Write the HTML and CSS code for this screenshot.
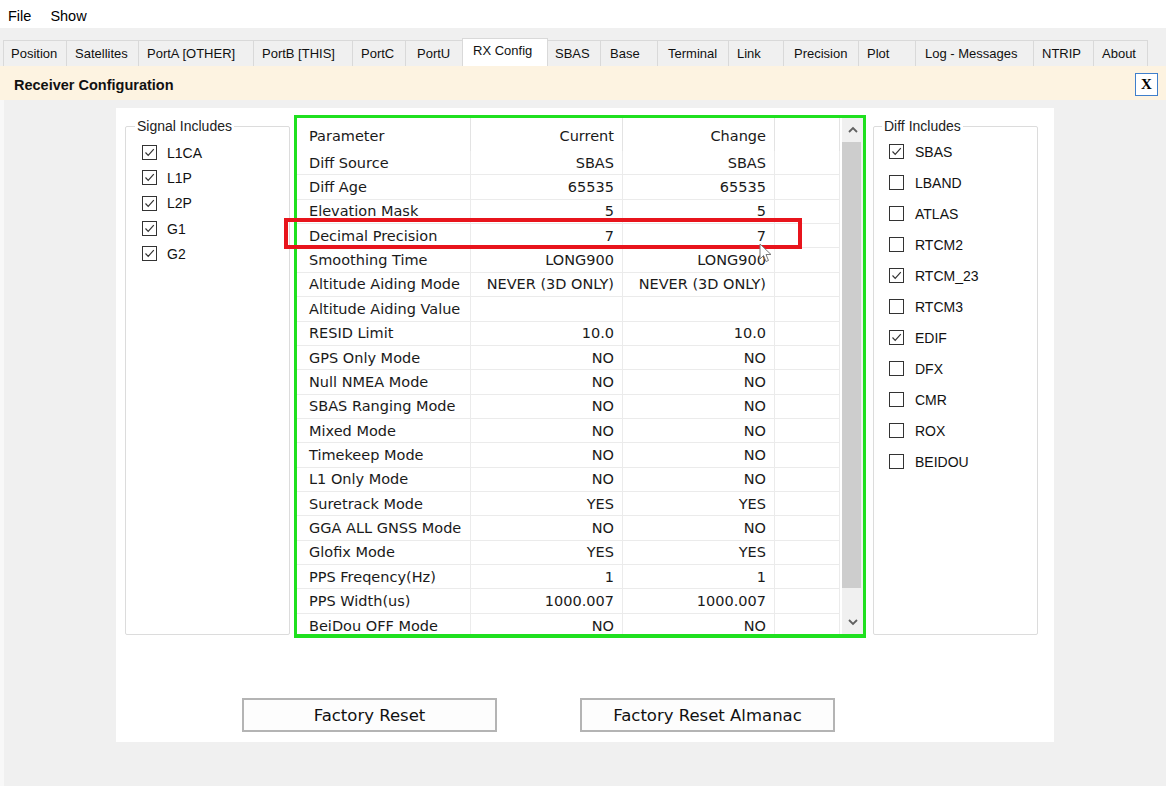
FILE: index.html
```html
<!DOCTYPE html>
<html lang="en">
<head>
    <meta charset="UTF-8">
    <title>Receiver Configuration</title>
    <link rel="stylesheet" href="styles.css">
</head>
<body>
    <div class="menubar">
        <span class="menu-item">File</span>
        <span class="menu-item">Show</span>
    </div>

    <div class="tabstrip">
        <div class="tab">Position</div>
        <div class="tab">Satellites</div>
        <div class="tab">PortA [OTHER]</div>
        <div class="tab">PortB [THIS]</div>
        <div class="tab">PortC</div>
        <div class="tab">PortU</div>
        <div class="tab active">RX Config</div>
        <div class="tab">SBAS</div>
        <div class="tab">Base</div>
        <div class="tab">Terminal</div>
        <div class="tab">Link</div>
        <div class="tab">Precision</div>
        <div class="tab">Plot</div>
        <div class="tab">Log - Messages</div>
        <div class="tab">NTRIP</div>
        <div class="tab">About</div>
    </div>

    <div class="titlebar">
        <span class="title">Receiver Configuration</span>
        <button class="close-btn">X</button>
    </div>

    <div class="workarea">
        <div class="panel">
            <div class="panel-top">
                <!-- signal checkboxes -->
                <fieldset class="group signal-group">
                    <legend>Signal Includes</legend>
                    <label class="check"><span class="box on"><svg viewBox="0 0 13 13"><polyline points="2.5,6.5 5.2,9.3 10.8,3.2"/></svg></span>L1CA</label>
                    <label class="check"><span class="box on"><svg viewBox="0 0 13 13"><polyline points="2.5,6.5 5.2,9.3 10.8,3.2"/></svg></span>L1P</label>
                    <label class="check"><span class="box on"><svg viewBox="0 0 13 13"><polyline points="2.5,6.5 5.2,9.3 10.8,3.2"/></svg></span>L2P</label>
                    <label class="check"><span class="box on"><svg viewBox="0 0 13 13"><polyline points="2.5,6.5 5.2,9.3 10.8,3.2"/></svg></span>G1</label>
                    <label class="check"><span class="box on"><svg viewBox="0 0 13 13"><polyline points="2.5,6.5 5.2,9.3 10.8,3.2"/></svg></span>G2</label>
                </fieldset>

                <!-- parameter grid -->
                <div class="grid-frame">
                    <div class="grid-inner">
                        <div class="grid">
                            <div class="row head"><span>Parameter</span><span class="num">Current</span><span class="num">Change</span><span></span></div>
                            <div class="row"><span>Diff Source</span><span class="num">SBAS</span><span class="num">SBAS</span><span></span></div>
                            <div class="row"><span>Diff Age</span><span class="num">65535</span><span class="num">65535</span><span></span></div>
                            <div class="row"><span>Elevation Mask</span><span class="num">5</span><span class="num">5</span><span></span></div>
                            <div class="row"><span>Decimal Precision</span><span class="num">7</span><span class="num">7</span><span></span></div>
                            <div class="row"><span>Smoothing Time</span><span class="num">LONG900</span><span class="num">LONG900</span><span></span></div>
                            <div class="row"><span>Altitude Aiding Mode</span><span class="num">NEVER (3D ONLY)</span><span class="num">NEVER (3D ONLY)</span><span></span></div>
                            <div class="row"><span>Altitude Aiding Value</span><span class="num"></span><span class="num"></span><span></span></div>
                            <div class="row"><span>RESID Limit</span><span class="num">10.0</span><span class="num">10.0</span><span></span></div>
                            <div class="row"><span>GPS Only Mode</span><span class="num">NO</span><span class="num">NO</span><span></span></div>
                            <div class="row"><span>Null NMEA Mode</span><span class="num">NO</span><span class="num">NO</span><span></span></div>
                            <div class="row"><span>SBAS Ranging Mode</span><span class="num">NO</span><span class="num">NO</span><span></span></div>
                            <div class="row"><span>Mixed Mode</span><span class="num">NO</span><span class="num">NO</span><span></span></div>
                            <div class="row"><span>Timekeep Mode</span><span class="num">NO</span><span class="num">NO</span><span></span></div>
                            <div class="row"><span>L1 Only Mode</span><span class="num">NO</span><span class="num">NO</span><span></span></div>
                            <div class="row"><span>Suretrack Mode</span><span class="num">YES</span><span class="num">YES</span><span></span></div>
                            <div class="row"><span>GGA ALL GNSS Mode</span><span class="num">NO</span><span class="num">NO</span><span></span></div>
                            <div class="row"><span>Glofix Mode</span><span class="num">YES</span><span class="num">YES</span><span></span></div>
                            <div class="row"><span>PPS Freqency(Hz)</span><span class="num">1</span><span class="num">1</span><span></span></div>
                            <div class="row"><span>PPS Width(us)</span><span class="num">1000.007</span><span class="num">1000.007</span><span></span></div>
                            <div class="row"><span>BeiDou OFF Mode</span><span class="num">NO</span><span class="num">NO</span><span></span></div>
                        </div>
                        <div class="scrollbar">
                            <div class="scroll-btn"><svg viewBox="0 0 16 16"><polyline points="4,10 8,6 12,10"/></svg></div>
                            <div class="scroll-track"><div class="scroll-thumb"></div></div>
                            <div class="scroll-btn"><svg viewBox="0 0 16 16"><polyline points="4,6 8,10 12,6"/></svg></div>
                        </div>
                    </div>
                    <div class="highlight"></div>
                    <svg class="cursor" viewBox="0 0 13 20">
                        <path d="M1 1 L1 16 L4.5 12.5 L7 18.5 L9.5 17.5 L7 11.5 L12 11.5 Z"/>
                    </svg>
                </div>

                <!-- diff checkboxes -->
                <fieldset class="group diff-group">
                    <legend>Diff Includes</legend>
                    <label class="check"><span class="box on"><svg viewBox="0 0 13 13"><polyline points="2.5,6.5 5.2,9.3 10.8,3.2"/></svg></span>SBAS</label>
                    <label class="check"><span class="box"></span>LBAND</label>
                    <label class="check"><span class="box"></span>ATLAS</label>
                    <label class="check"><span class="box"></span>RTCM2</label>
                    <label class="check"><span class="box on"><svg viewBox="0 0 13 13"><polyline points="2.5,6.5 5.2,9.3 10.8,3.2"/></svg></span>RTCM_23</label>
                    <label class="check"><span class="box"></span>RTCM3</label>
                    <label class="check"><span class="box on"><svg viewBox="0 0 13 13"><polyline points="2.5,6.5 5.2,9.3 10.8,3.2"/></svg></span>EDIF</label>
                    <label class="check"><span class="box"></span>DFX</label>
                    <label class="check"><span class="box"></span>CMR</label>
                    <label class="check"><span class="box"></span>ROX</label>
                    <label class="check"><span class="box"></span>BEIDOU</label>
                </fieldset>
            </div>

            <div class="actions">
                <button class="action-btn">Factory Reset</button>
                <button class="action-btn">Factory Reset Almanac</button>
            </div>
        </div>
    </div>
</body>
</html>
```

FILE: styles.css
```css
:root {
    --win-bg: #f0f0f0;
    --tab-line: #d9d9d9;
    --group-line: #dcdcdc;
    --grid-line: #ebebeb;
    --green: #1fe01f;
    --red: #e8141c;
    --text: #1a1a1a;
}
body {
    margin: 0;
    width: 1166px;
    height: 786px;
    overflow: hidden;
    font-family: 'Liberation Sans', Arial, sans-serif;
    color: #000;
    background-color: var(--win-bg);
}
.menubar {
    height: 28px;
    box-sizing: border-box;
    background-color: #fff;
    display: flex;
    align-items: center;
    gap: 19px;
    padding: 4px 0 0 8px;
    font-size: 14.5px;
}
.tabstrip {
    height: 38px;
    box-sizing: border-box;
    padding: 12px 0 0 3px;
    display: flex;
    align-items: flex-end;
    background-color: var(--win-bg);
}
.tab {
    height: 26px;
    box-sizing: border-box;
    border: 1px solid var(--tab-line);
    border-bottom: none;
    margin-right: -1px;
    padding: 0 0 0 8px;
    font-size: 13px;
    line-height: 25px;
    color: #111;
    white-space: nowrap;
}
.tab.active {
    height: 28px;
    line-height: 24px;
    background-color: #fff;
    padding-left: 10px;
}
.tab:nth-child(1) { width: 64px; padding-left: 7px; }
.tab:nth-child(2) { width: 73px; }
.tab:nth-child(3) { width: 116px; }
.tab:nth-child(4) { width: 100px; }
.tab:nth-child(5) { width: 54px; }
.tab:nth-child(6) { width: 58px; padding-left: 11px; }
.tab:nth-child(7) { width: 86px; }
.tab:nth-child(8) { width: 54px; padding-left: 7px; }
.tab:nth-child(9) { width: 58px; padding-left: 9px; }
.tab:nth-child(10) { width: 72px; padding-left: 10px; }
.tab:nth-child(11) { width: 56px; }
.tab:nth-child(12) { width: 76px; padding-left: 10px; }
.tab:nth-child(13) { width: 58px; }
.tab:nth-child(14) { width: 119px; padding-left: 9px; }
.tab:nth-child(15) { width: 61px; }
.tab:nth-child(16) { width: 55px; }
.titlebar {
    height: 34px;
    background-color: #fdf3e1;
    display: flex;
    align-items: center;
    justify-content: space-between;
    padding: 0 8px 0 14px;
}
.title {
    font-weight: bold;
    font-size: 14.5px;
    color: #111;
    padding-top: 4px;
}
.close-btn {
    width: 23px;
    height: 23px;
    padding: 0;
    margin-top: 2px;
    background-color: #fff;
    border: 1px solid #3f7fcc;
    font-family: 'Liberation Serif', serif;
    font-weight: bold;
    font-size: 15px;
    line-height: 20px;
    color: #000;
}
.workarea {
    height: 686px;
    box-sizing: border-box;
    padding: 8px 0 0 112px;
    border-left: 4px solid #f8f8f8;
}
.panel {
    width: 938px;
    height: 634px;
    background-color: #fff;
    box-sizing: border-box;
    padding: 7px 0 0 9px;
}
.panel-top {
    display: flex;
    align-items: flex-start;
}
.group {
    margin: 3px 0 0 0;
    padding: 0;
    width: 165px;
    height: 517px;
    box-sizing: border-box;
    border: 1px solid var(--group-line);
    border-radius: 2px;
    min-inline-size: 0;
}
.group legend {
    margin-left: -7px;
    padding: 0 2px;
    font-size: 14px;
    line-height: 16px;
    color: #222;
}
.signal-group {
    padding: 6px 0 0 16px;
}
.diff-group {
    margin-left: 7px;
    padding: 2px 0 0 15px;
}
.check {
    display: flex;
    align-items: center;
    font-size: 14px;
    color: #111;
}
.signal-group .check {
    height: 25.3px;
    gap: 10px;
}
.diff-group .check {
    height: 31px;
    gap: 11px;
}
.box {
    width: 15px;
    height: 15px;
    box-sizing: border-box;
    border: 1px solid #333;
    background-color: #fff;
    display: flex;
}
.box svg {
    width: 13px;
    height: 13px;
    fill: none;
    stroke: #333;
    stroke-width: 1.2;
}
.grid-frame {
    position: relative;
    margin-left: 4px;
    width: 572px;
    height: 523px;
    box-sizing: border-box;
    border: 3px solid var(--green);
    border-bottom-width: 4px;
}
.grid-inner {
    display: flex;
    height: 100%;
    overflow: hidden;
}
.grid {
    width: 543px;
    font-family: 'DejaVu Sans', Verdana, sans-serif;
    font-size: 14.5px;
    color: var(--text);
}
.row {
    display: grid;
    grid-template-columns: 174px 152px 152px 65px;
    height: 24.37px;
    box-sizing: border-box;
    border-bottom: 1px solid var(--grid-line);
}
.row.head {
    height: 33px;
    border-bottom: none;
}
.row span {
    border-right: 1px solid var(--grid-line);
    padding: 0 8px 0 12px;
    display: flex;
    align-items: center;
    white-space: nowrap;
    overflow: hidden;
}
.row.head span {
    border-right-color: #e3e3e3;
    padding-top: 2px;
}
.row span.num {
    justify-content: flex-end;
    padding: 0 8px 0 0;
}
.row.head span.num {
    padding-top: 2px;
}
.scrollbar {
    width: 23px;
    display: flex;
    flex-direction: column;
    background-color: var(--win-bg);
    border-left: 2px solid #fff;
}
.scroll-btn {
    height: 24px;
    display: flex;
    align-items: center;
    justify-content: center;
}
.scroll-btn svg {
    width: 16px;
    height: 16px;
    fill: none;
    stroke: #606060;
    stroke-width: 1.8;
}
.scroll-track {
    flex: 1;
    padding-right: 2px;
}
.scroll-thumb {
    height: 446px;
    background-color: #cdcdcd;
}
.highlight {
    position: absolute;
    left: -13px;
    top: 100px;
    width: 518px;
    height: 31px;
    box-sizing: border-box;
    border: 4px solid var(--red);
}
.cursor {
    position: absolute;
    left: 462px;
    top: 125px;
    width: 13px;
    height: 20px;
    fill: #fff;
    stroke: #7a7a7a;
    stroke-width: 1;
}
.actions {
    display: flex;
    gap: 83px;
    margin: 60px 0 0 117px;
}
.action-btn {
    width: 255px;
    height: 34px;
    background-color: #fdfdfd;
    border: 2px solid #b4b4b4;
    font-family: 'DejaVu Sans', Verdana, sans-serif;
    font-size: 16.5px;
    color: #111;
}
```
